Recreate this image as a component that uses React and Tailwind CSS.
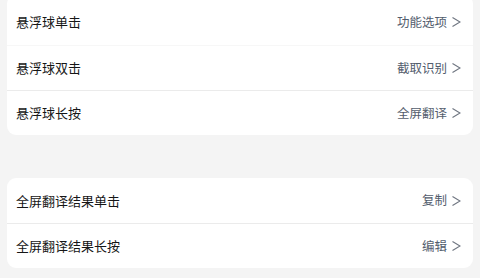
export default function App() {
  const groupA = [
    { label: "悬浮球单击", value: "功能选项", first: true },
    { label: "悬浮球双击", value: "截取识别" },
    { label: "悬浮球长按", value: "全屏翻译" },
  ];
  const groupB = [
    { label: "全屏翻译结果单击", value: "复制" },
    { label: "全屏翻译结果长按", value: "编辑" },
  ];

  const Row = ({ label, value, first, divider, faint }) => (
    <div
      className={`flex items-center justify-between pl-[9px] pr-[12px] ${
        first ? "h-[50px] pt-[4px]" : "h-[45px]"
      } ${divider ? (faint ? "border-t border-[#f7f7f7]" : "border-t border-[#ebebeb]") : ""}`}
    >
      <span className="text-[13px] text-[#161616]">{label}</span>
      <span className="flex items-center gap-[4px] text-[12.5px] text-[#535d6d]">
        {value}
        <svg width="10" height="12" viewBox="0 0 10 12" fill="none">
          <path d="M1.5 1.5l7.5 4.5-7.5 4.5" stroke="#6e7580" strokeWidth="1.1" />
        </svg>
      </span>
    </div>
  );

  return (
    <div
      className="h-[278px] w-[480px] overflow-hidden bg-[#f4f4f4] px-[7px]"
      style={{ fontFamily: '"Noto Sans CJK SC", "Noto Sans", sans-serif' }}
    >
      <div className="-mt-[5px] overflow-hidden rounded-[9px] bg-white">
        {groupA.map((r, i) => (
          <Row key={r.label} {...r} divider={i > 0} faint={i === 1} />
        ))}
      </div>
      <div className="mt-[43px] overflow-hidden rounded-[9px] bg-white">
        {groupB.map((r, i) => (
          <Row key={r.label} {...r} divider={i > 0} />
        ))}
      </div>
    </div>
  );
}
